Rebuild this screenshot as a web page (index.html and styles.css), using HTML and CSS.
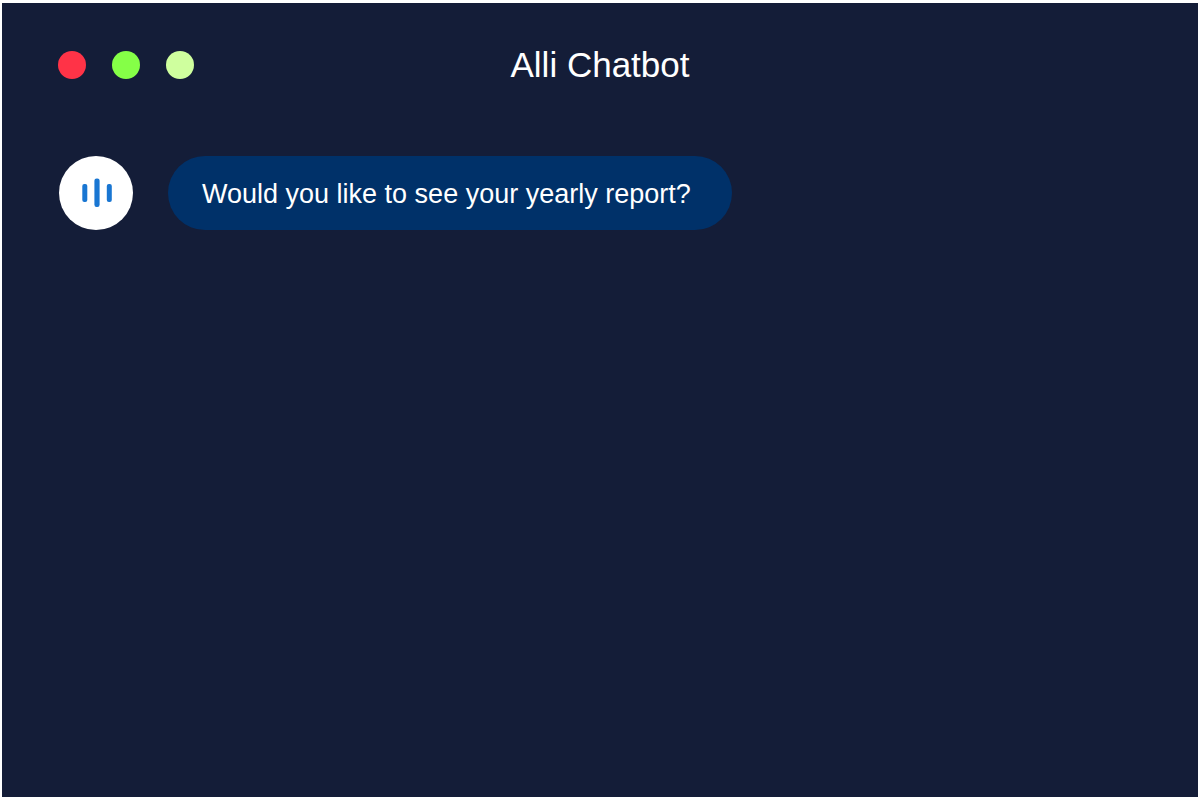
FILE: index.html
```html
<!DOCTYPE html>
<html lang="en">
<head>
    <meta charset="UTF-8">
    <meta name="viewport" content="width=device-width, initial-scale=1.0">
    <title>Alli Chatbot</title>
    <link rel="stylesheet" href="styles.css">
</head>
<body>

<div class="chat-window">
    <header class="title-bar">
        <div class="dots">
            <span class="dot dot-red"></span>
            <span class="dot dot-green"></span>
            <span class="dot dot-lime"></span>
        </div>
        <h1 class="title">Alli Chatbot</h1>
    </header>

    <main class="messages">
        <div class="message">
            <div class="avatar">
                <svg width="74" height="74" viewBox="0 0 74 74" fill="#1976d2" aria-hidden="true">
                    <rect x="23.3" y="28" width="5" height="18" rx="2"/>
                    <rect x="35.4" y="22.5" width="5.2" height="28.5" rx="2.2"/>
                    <rect x="47.8" y="28" width="5" height="18" rx="2"/>
                </svg>
            </div>
            <p class="bubble">Would you like to see your yearly report?</p>
        </div>
    </main>
</div>

</body>
</html>
```

FILE: styles.css
```css
* {
    box-sizing: border-box;
}

body {
    margin: 0;
    padding: 3px 2px 2px;
    min-height: 100vh;
    display: flex;
    background-color: #fff;
    color: #fff;
    font-family: "Liberation Sans", Arial, sans-serif;
}

.chat-window {
    flex: 1;
    padding: 42px 56px;
    background-color: #141d38;
}

.title-bar {
    display: grid;
    grid-template-columns: 1fr auto 1fr;
    align-items: center;
}

.dots {
    display: flex;
    gap: 26px;
}

.dot {
    width: 28px;
    height: 28px;
    border-radius: 50%;
}

.dot-red {
    background-color: #ff3347;
}

.dot-green {
    background-color: #85ff47;
}

.dot-lime {
    background-color: #cfff9e;
}

.title {
    margin: 0;
    font-size: 35px;
    font-weight: normal;
    line-height: 40px;
}

.messages {
    margin-top: 71px;
    padding: 0 1px;
}

.message {
    display: flex;
    align-items: center;
    gap: 35px;
}

.avatar {
    flex: none;
    width: 74px;
    height: 74px;
    border-radius: 50%;
    background-color: #fff;
}

.avatar svg {
    display: block;
}

.bubble {
    margin: 0;
    padding: 21px 41px 19px 34px;
    border-radius: 37px;
    background-color: #003169;
    font-size: 27px;
    line-height: 34px;
}
```
